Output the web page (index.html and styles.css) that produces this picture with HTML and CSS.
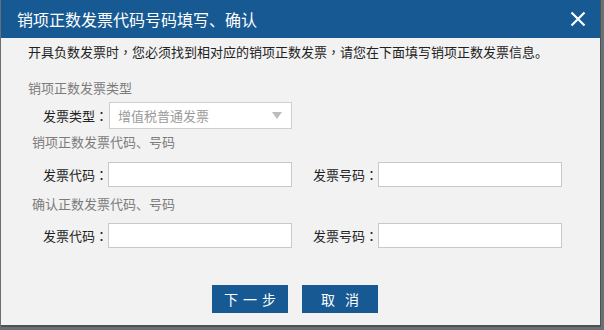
FILE: index.html
```html
<!DOCTYPE html>
<html>

<head>
  <title>销项正数发票代码号码填写、确认</title>
  <link rel="stylesheet" href="styles.css">
</head>

<body>
  <div class="dialog">
    <div class="dialog-header">
      <span class="dialog-title">销项正数发票代码号码填写、确认</span>
      <span class="dialog-close">
        <svg width="16" height="16" viewBox="0 0 16 16">
          <path d="M1.5 1.5 L14.5 14.5 M14.5 1.5 L1.5 14.5" stroke="#fff" stroke-width="2.2" fill="none" />
        </svg>
      </span>
    </div>

    <div class="dialog-body">
      <p class="notice">开具负数发票时<span class="punct">，</span>您必须找到相对应的销项正数发票<span class="punct">，</span>请您在下面填写销项正数发票信息。</p>

      <div class="section-title first">销项正数发票类型</div>
      <div class="form-row">
        <label class="field-label">发票类型<span class="punct">：</span></label>
        <div class="fake-select">
          <span>增值税普通发票</span>
          <svg width="10" height="7" viewBox="0 0 10 7">
            <polygon points="0,0 10,0 5,7" fill="#bdbdbd" />
          </svg>
        </div>
      </div>

      <div class="section-title">销项正数发票代码、号码</div>
      <div class="form-row row-gap">
        <label class="field-label">发票代码<span class="punct">：</span></label>
        <input type="text" class="field-input">
        <label class="field-label second">发票号码<span class="punct">：</span></label>
        <input type="text" class="field-input">
      </div>

      <div class="section-title">确认正数发票代码、号码</div>
      <div class="form-row row-gap-2">
        <label class="field-label">发票代码<span class="punct">：</span></label>
        <input type="text" class="field-input">
        <label class="field-label second">发票号码<span class="punct">：</span></label>
        <input type="text" class="field-input">
      </div>

      <div class="buttons">
        <button type="button" class="btn btn-next">下一步</button>
        <button type="button" class="btn btn-cancel">取消</button>
      </div>
    </div>
  </div>
</body>

</html>
```

FILE: styles.css
```css
body {
  margin: 0;
  padding: 0;
  background-color: #6a6f72;
  font-family: "Noto Sans CJK SC", "Microsoft YaHei", sans-serif;
  height: 330px;
  overflow: hidden;
}

.dialog {
  margin-left: 1px;
  width: 600px;
  height: 327px;
  background-color: #f2f2f2;
  border-right: 1px solid #4c5255;
  border-bottom: 2px solid #4c5255;
  box-sizing: border-box;
}

.dialog-header {
  height: 38px;
  background-color: #175a93;
  display: flex;
  align-items: center;
  justify-content: space-between;
  padding: 0 14px 0 16px;
}

.dialog-title {
  color: #fff;
  font-size: 16px;
  line-height: 20px;
}

.dialog-close {
  display: flex;
  align-items: center;
  cursor: pointer;
}

/* centred full-width punctuation, like the original */
.punct {
  font-family: "Noto Sans CJK TC", sans-serif;
}

.notice {
  margin: 4px 0 0 27px;
  font-size: 13px;
  line-height: 20px;
  color: #222;
}

.section-title {
  margin: 3px 0 0 31px;
  font-size: 13px;
  line-height: 20px;
  color: #7b7b7b;
}

.section-title.first {
  margin: 16px 0 0 27px;
}

.form-row {
  display: flex;
  align-items: center;
  margin-top: 4px;
  padding-left: 42px;
}

.form-row.row-gap {
  margin-top: 10px;
}

.form-row.row-gap-2 {
  margin-top: 9px;
}

.row-gap + .section-title {
  margin-top: 7px;
}

.field-label {
  width: 65px;
  font-size: 13px;
  color: #222;
  white-space: nowrap;
}

.field-label.second {
  margin-left: 21px;
}

.field-input {
  width: 184px;
  height: 25px;
  box-sizing: border-box;
  border: 1px solid #c9c9c9;
  background-color: #fff;
  margin: 0;
  padding: 0 6px;
  outline: none;
}

.fake-select {
  width: 183px;
  height: 27px;
  box-sizing: border-box;
  border: 1px solid #cfcfcf;
  background-color: #fff;
  margin-left: 1px;
  display: flex;
  align-items: center;
  justify-content: space-between;
  padding: 0 9px 0 8px;
  font-size: 13px;
  color: #9a9a9a;
}

.buttons {
  display: flex;
  gap: 14px;
  margin-top: 37px;
  padding-left: 211px;
}

.btn {
  width: 76px;
  height: 28px;
  border: none;
  background-color: #175a93;
  color: #fff;
  font-family: "Noto Sans CJK SC", "Microsoft YaHei", sans-serif;
  font-size: 14px;
  cursor: pointer;
  padding: 0;
}

.btn-next {
  letter-spacing: 5px;
  text-indent: 5px;
}

.btn-cancel {
  letter-spacing: 10px;
  text-indent: 10px;
}

.btn:hover {
  background-color: #124a7a;
}
```
